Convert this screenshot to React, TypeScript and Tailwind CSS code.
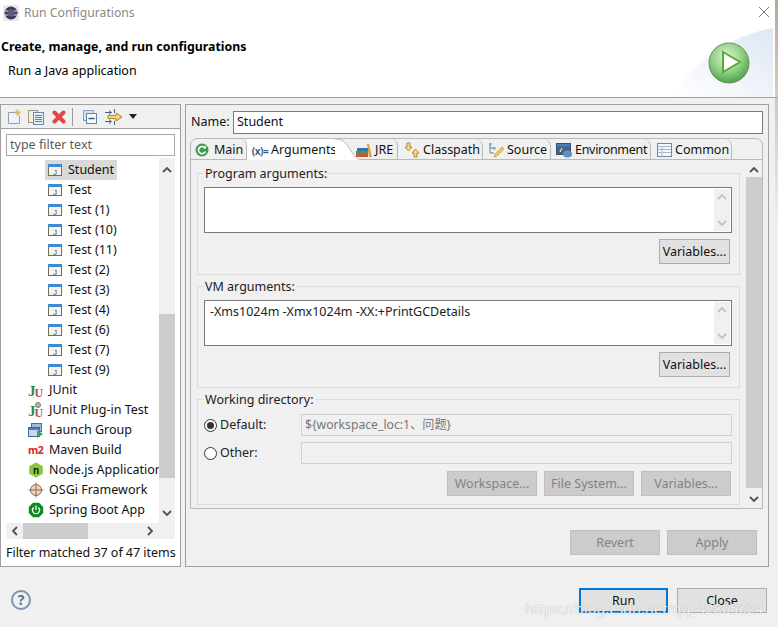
import type { ReactNode } from "react";

const javaRows = ["Student", "Test", "Test (1)", "Test (10)", "Test (11)", "Test (2)", "Test (3)", "Test (4)", "Test (6)", "Test (7)", "Test (9)"];

function JavaIcon() {
  return (
    <svg width="16" height="16" viewBox="0 0 16 16">
      <rect x="1.5" y="2.5" width="13" height="11" fill="#f6f3e8" stroke="#6f7263" />
      <rect x="1" y="2" width="14" height="3" fill="#3f8ad4" />
      <text x="8" y="12.5" fontSize="8" textAnchor="middle" fill="#30507a" fontFamily="Liberation Sans, sans-serif">J</text>
    </svg>
  );
}

function JUnitIcon({ plugin }: { plugin?: boolean }) {
  return (
    <svg width="16" height="16" viewBox="0 0 16 16" fontFamily="Liberation Serif, serif" fontWeight="700">
      {plugin && <circle cx="10" cy="3" r="2.5" fill="#e0b050" stroke="#5a80b0" />}
      <text x="0" y="14" fontSize="15" fill="#2f8a4f">J</text>
      <text x="6.5" y="14.5" fontSize="12" fill="#c04848">U</text>
    </svg>
  );
}

function LaunchGroupIcon() {
  return (
    <svg width="16" height="16" viewBox="0 0 16 16">
      <rect x="3.5" y="1.5" width="10" height="8" fill="#9db8d8" stroke="#4a6f98" />
      <rect x="0.5" y="5.5" width="11" height="9" fill="#c6d8ea" stroke="#3f6793" />
      <rect x="1" y="6" width="10" height="2" fill="#4a7eb4" />
      <path d="M9 8 L15 12 L9 16 Z" fill="#3f9e62" />
    </svg>
  );
}

function NodeIcon() {
  return (
    <svg width="16" height="16" viewBox="0 0 16 16">
      <path d="M8 0.5 L14.8 4.2 V11.8 L8 15.5 L1.2 11.8 V4.2 Z" fill="#8cc63f" />
      <text x="8" y="12" fontSize="10" fontWeight="700" textAnchor="middle" fill="#1a1a1a" fontFamily="Liberation Sans, sans-serif">n</text>
    </svg>
  );
}

function OsgiIcon() {
  return (
    <svg width="16" height="16" viewBox="0 0 16 16">
      <circle cx="8" cy="8" r="5.5" fill="#ecd6c0" stroke="#8a6a52" />
      <path d="M8 0.5 V15.5 M0.5 8 H15.5" stroke="#9a6a4a" />
    </svg>
  );
}

function SpringIcon() {
  return (
    <svg width="16" height="16" viewBox="0 0 16 16">
      <path d="M5 0.8 H11 L15.2 5 V11 L11 15.2 H5 L0.8 11 V5 Z" fill="#0f8a1e" />
      <path d="M5.6 5.4 A3.6 3.6 0 1 0 10.4 5.4 M8 3.6 V8" fill="none" stroke="#fff" strokeWidth="1.3" />
    </svg>
  );
}

function TreeRow({ icon, label, indent, selected }: { icon: ReactNode; label: string; indent: string; selected?: boolean }) {
  return (
    <div className={`flex h-5 items-center ${indent}`}>
      <span className={`flex h-5 items-center pl-[2px] ${selected ? "bg-[#d9d9d9] pr-[3px]" : ""}`}>
        <span className="mr-[5px] w-4 shrink-0">{icon}</span>
        <span className="whitespace-nowrap">{label}</span>
      </span>
    </div>
  );
}

function Chevron({ dir, className }: { dir: "up" | "down" | "left" | "right"; className: string }) {
  const d = { up: "M1 7 L5 3 L9 7", down: "M1 3 L5 7 L9 3", left: "M7 1 L3 5 L7 9", right: "M3 1 L7 5 L3 9" }[dir];
  return (
    <svg width="10" height="10" viewBox="0 0 10 10" className={className}>
      <path d={d} fill="none" stroke="currentColor" strokeWidth="1.8" />
    </svg>
  );
}

const btnStyles = {
  normal: "border border-[#adadad] bg-[#e1e1e1] text-[#111]",
  disabled: "border border-[#bfbfbf] bg-[#cccccc] text-[#838383]",
  focused: "border-2 border-[#0078d7] bg-[#e1e1e1] text-[#111]",
};

function Btn({ label, variant = "normal", className = "" }: { label: string; variant?: "normal" | "disabled" | "focused"; className?: string }) {
  return <div className={`flex h-[25px] items-center justify-center pt-[2px] ${btnStyles[variant]} ${className}`}>{label}</div>;
}

function ArgsBox({ text }: { text?: string }) {
  return (
    <div className="flex h-[46px] justify-between border border-[#7a7a7a] bg-white pl-[5px]">
      <span className="pt-[5px]">{text}</span>
      <div className="m-px flex w-[16px] flex-col items-center justify-between bg-[#f0f0f0] py-[3px] text-[#c2c2c2]">
        <Chevron dir="up" className="" />
        <Chevron dir="down" className="" />
      </div>
    </div>
  );
}

function Group({ title, height, children }: { title: string; height: string; children: ReactNode }) {
  return (
    <fieldset className={`border border-[#dcdcdc] pr-[7px] pl-[6px] ${height}`}>
      <legend className="px-[1px] leading-[17px]">{title}</legend>
      {children}
    </fieldset>
  );
}

function Tab({ label, icon, width, active }: { label: string; icon: ReactNode; width: string; active?: boolean }) {
  return (
    <div className={`flex items-center pt-[2px] ${width} ${active ? "h-[21px] bg-white" : "h-[20px] rounded-tr-[7px] border-r border-[#b9b9b9]"}`}>
      <span className="mr-[3px] flex w-4 shrink-0 justify-center">{icon}</span>
      <span className="whitespace-nowrap">{label}</span>
    </div>
  );
}

export default function App() {
  return (
    <div className="relative flex h-[627px] w-[778px] flex-col overflow-hidden bg-[#f0f0f0] text-[12.5px] leading-none text-[#111] font-['Noto_Sans','Noto_Sans_CJK_SC',sans-serif]">
      {/* header */}
      <div className="relative h-[98px] shrink-0 overflow-hidden border-b border-[#a0a0a0] bg-white">
        <svg className="absolute top-0 right-[5px]" width="120" height="97" viewBox="0 0 120 97">
          <defs>
            <linearGradient id="swoosh" x1="0" y1="1" x2="1" y2="0">
              <stop offset="0" stopColor="#ffffff" />
              <stop offset="1" stopColor="#dfe7f4" />
            </linearGradient>
          </defs>
          <path d="M20 97 C40 60 80 35 120 28 V97 Z" fill="url(#swoosh)" />
        </svg>
        <div className="flex h-[26px] items-center pl-[3px] text-[12.2px] text-[#8a8a8a]">
          <svg width="16" height="16" viewBox="0 0 16 16" className="mr-[5px]">
            <rect width="16" height="16" fill="#e9e6ee" />
            <circle cx="8" cy="8" r="6.5" fill="#3c3856" />
            <path d="M1.5 6 H14.5 M1.5 10 H14.5" stroke="#e9e6ee" />
            <circle cx="8" cy="8" r="3.8" fill="#5f5a80" />
          </svg>
          Run Configurations
        </div>
        <div className="pt-[15px] pl-px text-[12.35px] font-bold text-black">Create, manage, and run configurations</div>
        <div className="pt-[12px] pl-[8px] text-black">Run a Java application</div>
        <svg className="absolute top-[3px] right-[5px]" width="18" height="18" viewBox="0 0 18 18">
          <path d="M4 4 L14 14 M14 4 L4 14" stroke="#7a7a7a" />
        </svg>
        <svg className="absolute top-[42px] left-[708px]" width="43" height="44" viewBox="0 0 43 44">
          <defs>
            <radialGradient id="ball" cx="0.45" cy="0.35" r="0.7">
              <stop offset="0" stopColor="#e4f4da" />
              <stop offset="0.55" stopColor="#8fcf86" />
              <stop offset="1" stopColor="#3f9a3f" />
            </radialGradient>
          </defs>
          <circle cx="21" cy="21" r="20" fill="url(#ball)" stroke="#6f8f50" />
          <path d="M15 10 L32 20 L15 30 Z" fill="#fff" stroke="#58ae2c" strokeWidth="2" />
        </svg>
      </div>

      {/* body */}
      <div className="flex h-[469px] shrink-0 gap-[4px] pt-[6px] pr-[9px]">
        {/* left panel */}
        <div className="flex h-[463px] w-[181px] shrink-0 flex-col border border-[#a0a0a0] bg-white">
          <div className="flex h-[24px] shrink-0 items-center border-b border-[#a0a0a0] bg-[#f0f0f0] pl-[6px]">
            <svg width="14" height="16" viewBox="0 0 14 16">
              <path d="M1.5 3.5 H9 L12.5 7 V14.5 H1.5 Z" fill="#eef3f9" stroke="#8fa0b4" />
              <path d="M10.5 0.5 V6.5 M7.5 3.5 H13.5" stroke="#e0b850" strokeWidth="1.8" />
            </svg>
            <svg width="16" height="16" viewBox="0 0 16 16" className="ml-[7px]">
              <rect x="0.5" y="1.5" width="9" height="12" fill="#f2efe4" stroke="#a89a78" />
              <rect x="5.5" y="3.5" width="10" height="12" fill="#e8eef6" stroke="#7088a8" />
              <path d="M7 6.5 H14 M7 8.5 H14 M7 10.5 H14 M7 12.5 H14" stroke="#6080a8" />
            </svg>
            <svg width="14" height="14" viewBox="0 0 14 14" className="ml-[8px]">
              <path d="M2.5 2.5 L11.5 11.5 M11.5 2.5 L2.5 11.5" stroke="#e04848" strokeWidth="4" strokeLinecap="round" />
            </svg>
            <span className="ml-[6px] h-[18px] w-px bg-[#9a9a9a]" />
            <svg width="14" height="14" viewBox="0 0 14 14" className="ml-[10px]">
              <rect x="0.5" y="0.5" width="10" height="10" fill="#d8e2ee" stroke="#8aa0bc" />
              <rect x="3.5" y="3.5" width="10" height="10" fill="#f4f7fb" stroke="#6485aa" />
              <path d="M5.5 8.5 H11.5" stroke="#2f5a8a" strokeWidth="1.4" />
            </svg>
            <svg width="18" height="16" viewBox="0 0 18 16" className="ml-[8px]">
              <path d="M0 3.5 H6 M4 1.5 L6.5 3.5 L4 5.5 M0 12.5 H6 M4 10.5 L6.5 12.5 L4 14.5 M9.5 0 V4 M9.5 12 V16" fill="none" stroke="#45607c" />
              <path d="M3 6.5 H11 V4 L17 8 L11 12 V9.5 H3 Z" fill="#f5d878" stroke="#a9893a" />
            </svg>
            <svg width="8" height="5" viewBox="0 0 8 5" className="ml-[6px]">
              <path d="M0 0 H8 L4 5 Z" fill="#222" />
            </svg>
          </div>
          <div className="mx-[5px] mt-[5px] flex h-[22px] shrink-0 items-center border border-[#a8a8a8] bg-white pl-[3px] text-[#5c5c5c]">type filter text</div>
          <div className="mt-[2px] ml-[5px] flex h-[365px] w-[169px] shrink-0 overflow-hidden">
            <div className="w-[153px] overflow-hidden pt-[2px]">
              {javaRows.map((row, i) => (
                <TreeRow key={row} icon={<JavaIcon />} label={row} indent="pl-[39px]" selected={i === 0} />
              ))}
              <TreeRow icon={<JUnitIcon />} label="JUnit" indent="pl-[20px]" />
              <TreeRow icon={<JUnitIcon plugin />} label="JUnit Plug-in Test" indent="pl-[20px]" />
              <TreeRow icon={<LaunchGroupIcon />} label="Launch Group" indent="pl-[20px]" />
              <TreeRow
                icon={<span className="text-[10.5px] leading-none font-bold tracking-[-0.5px] text-[#e02020]">m2</span>}
                label="Maven Build"
                indent="pl-[20px]"
              />
              <TreeRow icon={<NodeIcon />} label="Node.js Application" indent="pl-[20px]" />
              <TreeRow icon={<OsgiIcon />} label="OSGi Framework" indent="pl-[20px]" />
              <TreeRow icon={<SpringIcon />} label="Spring Boot App" indent="pl-[20px]" />
            </div>
            <div className="flex w-[16px] shrink-0 flex-col items-center bg-[#f0f0f0] text-[#505050]">
              <Chevron dir="up" className="mt-[7px] shrink-0" />
              <div className="mt-[139px] h-[164px] w-full shrink-0 bg-[#cdcdcd]" />
              <Chevron dir="down" className="mt-[30px] shrink-0" />
            </div>
          </div>
          <div className="mx-[5px] flex h-[16px] shrink-0 items-center bg-[#f0f0f0] text-[#505050]">
            <Chevron dir="left" className="ml-[4px] shrink-0" />
            <div className="ml-[3px] h-full w-[65px] bg-[#cdcdcd]" />
            <Chevron dir="right" className="ml-[57px] shrink-0" />
          </div>
          <div className="flex flex-1 items-center pt-[2px] pl-[5px] tracking-[-0.03px]">Filter matched 37 of 47 items</div>
        </div>

        {/* right panel */}
        <div className="flex h-[463px] flex-1 flex-col border border-[#a0a0a0] bg-[#f0f0f0] pr-[5px] pl-[4px]">
          <div className="flex h-[33px] shrink-0 items-center pt-[2px]">
            <span className="w-[43px] pl-px">Name:</span>
            <div className="flex h-[23px] flex-1 items-center border border-[#7a7a7a] bg-white pl-[3px]">Student</div>
          </div>
          <div className="flex h-[371px] shrink-0 flex-col rounded-t-[7px] border border-[#b9b9b9]">
            <div className="flex h-[21px] shrink-0 border-b border-[#b9b9b9]">
              <Tab
                label="Main"
                width="w-[56px] pl-[4px] rounded-tl-[7px]"
                icon={
                  <svg width="14" height="14" viewBox="0 0 14 14" className="-translate-x-px">
                    <circle cx="7" cy="7" r="6.5" fill="#3c9a4e" />
                    <path d="M10 5 A3.6 3.6 0 1 0 10.4 8.5" fill="none" stroke="#fff" strokeWidth="1.7" />
                    <path d="M8 5.5 H11 V2.5 Z" fill="#fff" />
                  </svg>
                }
              />
              <Tab
                label="Arguments"
                width="w-[88px] pl-[5px]"
                active
                icon={<span className="text-[10px] font-bold tracking-[-0.5px] whitespace-nowrap text-[#3f5f8a]">(x)=</span>}
              />
              <svg width="26" height="21" viewBox="0 0 26 21" className="-mr-[7px] shrink-0">
                <path d="M0 0 C10 0 12 6 16 12 C20 18 22 20.5 26 20.5 V21 H0 Z" fill="#fff" />
                <path d="M0 0 C10 0 12 6 16 12 C20 18 22 20.5 26 20.5" fill="none" stroke="#b9b9b9" />
              </svg>
              <Tab
                label="JRE"
                width="w-[44px] pl-[2px]"
                icon={
                  <svg width="16" height="15" viewBox="0 0 16 15">
                    <rect x="0" y="11" width="12" height="3" fill="#c05a3a" />
                    <rect x="0" y="8" width="12" height="3" fill="#3f9a5a" />
                    <rect x="1" y="5" width="11" height="3" fill="#3f6fb0" />
                    <path d="M11 1 L13 1 L16 14 L13 14 Z" fill="#d8a040" />
                  </svg>
                }
              />
              <Tab
                label="Classpath"
                width="w-[85px] pl-[6px]"
                icon={
                  <svg width="16" height="16" viewBox="0 0 16 16">
                    <path d="M3 1 H6 V5 H8 L4.5 9 L1 5 H3 Z" fill="#f6d98a" stroke="#b8862e" />
                    <path d="M10 15 H13 V11 H15 L11.5 7 L8 11 H10 Z" fill="#f6d98a" stroke="#b8862e" />
                  </svg>
                }
              />
              <Tab
                label="Source"
                width="w-[68px] pl-[5px]"
                icon={
                  <svg width="16" height="16" viewBox="0 0 16 16">
                    <path d="M2 2 V11 H6 M2 6 H6" fill="none" stroke="#5a7fa8" />
                    <rect x="1" y="1" width="2.5" height="2.5" fill="#7ea3c8" />
                    <rect x="5" y="5" width="2.5" height="2.5" fill="#7ea3c8" />
                    <path d="M6 15 L7 12 L14 5 L16 7 L9 14 Z" fill="#f0c860" stroke="#b8902e" strokeWidth="0.6" />
                  </svg>
                }
              />
              <Tab
                label="Environment"
                width="w-[100px] pl-[5px] tracking-[-0.3px]"
                icon={
                  <svg width="16" height="15" viewBox="0 0 16 15">
                    <rect x="0.5" y="0.5" width="14" height="11" fill="#50607a" stroke="#35506f" />
                    <rect x="1" y="1" width="13" height="2.5" fill="#3f7fc4" />
                    <path d="M4 9 L6 5" stroke="#fff" />
                    <ellipse cx="11.5" cy="11" rx="4.5" ry="3.5" fill="#5b93c8" />
                  </svg>
                }
              />
              <Tab
                label="Common"
                width="w-[81px] pl-[5px]"
                icon={
                  <svg width="15" height="14" viewBox="0 0 15 14">
                    <rect x="0.5" y="0.5" width="14" height="13" fill="#f4f6fa" stroke="#6f87a8" />
                    <path d="M1 3.5 H14 M1 6.5 H14 M1 9.5 H14 M5 3.5 V13.5" stroke="#a8bad0" />
                  </svg>
                }
              />
            </div>
            <div className="flex flex-1">
              <div className="flex w-[555px] flex-col gap-[3px] pt-[5px] pr-[6px] pl-[6px] text-[#222]">
                <Group title="Program arguments:" height="h-[110px] pt-[5px]">
                  <ArgsBox />
                  <div className="mt-[6px] flex justify-end pr-[2px]">
                    <Btn label="Variables..." className="w-[71px]" />
                  </div>
                </Group>
                <Group title="VM arguments:" height="h-[110px] pt-[5px]">
                  <ArgsBox text="-Xms1024m -Xmx1024m -XX:+PrintGCDetails" />
                  <div className="mt-[6px] flex justify-end pr-[2px]">
                    <Btn label="Variables..." className="w-[71px]" />
                  </div>
                </Group>
                <Group title="Working directory:" height="h-[114px] pt-[6px]">
                  <div className="flex h-[22px] items-center">
                    <span className="mr-[3px] flex h-[13px] w-[13px] items-center justify-center rounded-full border border-[#333] bg-white">
                      <span className="h-[7px] w-[7px] rounded-full bg-[#333]" />
                    </span>
                    <span className="w-[81px]">Default:</span>
                    <div className="flex h-[22px] flex-1 items-center border border-[#d0d0d0] pl-[3px] text-[12.2px] text-[#777]">{"${workspace_loc:1、问题}"}</div>
                  </div>
                  <div className="mt-[6px] flex h-[22px] items-center">
                    <span className="mr-[3px] h-[13px] w-[13px] rounded-full border border-[#333] bg-white" />
                    <span className="w-[81px]">Other:</span>
                    <div className="h-[22px] flex-1 border border-[#d0d0d0]" />
                  </div>
                  <div className="mt-[7px] flex justify-end gap-[7px] pr-px">
                    <Btn label="Workspace..." variant="disabled" className="w-[90px]" />
                    <Btn label="File System..." variant="disabled" className="w-[90px]" />
                    <Btn label="Variables..." variant="disabled" className="w-[90px]" />
                  </div>
                </Group>
              </div>
              <div className="flex w-[16px] flex-col items-center text-[#505050]">
                <Chevron dir="up" className="mt-[5px] shrink-0" />
                <div className="mt-[2px] h-[311px] w-full shrink-0 bg-[#cdcdcd]" />
                <Chevron dir="down" className="mt-[6px] shrink-0" />
              </div>
            </div>
          </div>
          <div className="mt-[21px] flex justify-end gap-[7px] pr-[6px]">
            <Btn label="Revert" variant="disabled" className="w-[90px]" />
            <Btn label="Apply" variant="disabled" className="w-[90px]" />
          </div>
        </div>
      </div>

      {/* footer */}
      <div className="flex flex-1 items-start pr-[11px] pl-[11px]">
        <span className="mt-[23px] flex h-[20px] w-[20px] items-center justify-center rounded-full border-2 border-[#7d93ad] text-[14px] font-bold text-[#5a7391]">?</span>
        <div className="mt-[21px] ml-auto flex gap-[9px]">
          <Btn label="Run" variant="focused" className="w-[89px]" />
          <Btn label="Close" className="w-[90px]" />
        </div>
      </div>

      <div className="pointer-events-none absolute top-[601px] left-[525px] text-[14.5px] leading-none whitespace-nowrap text-white/85 [text-shadow:0_0_1px_rgba(120,120,120,0.7)]">https://blog.csdn.net/qq_42865624</div>
      <div className="pointer-events-none absolute top-0 right-0 h-[230px] w-[3px] bg-gradient-to-b from-[#b5a898] to-transparent" />
    </div>
  );
}
